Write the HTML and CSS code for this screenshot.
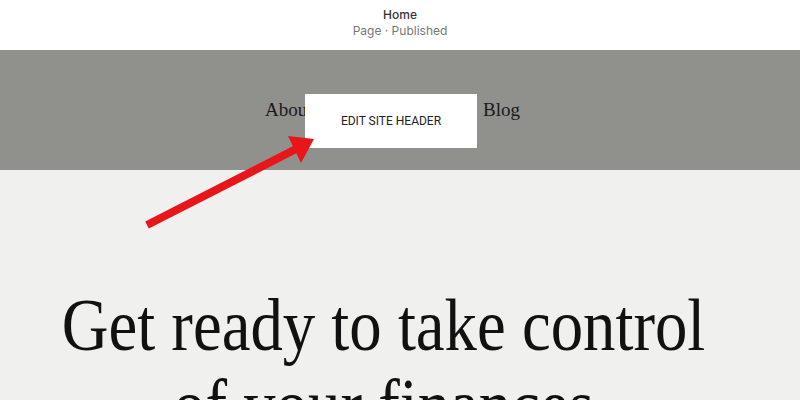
FILE: index.html
```html
<!DOCTYPE html>
<html lang="en">
<head>
  <meta charset="UTF-8">
  <meta name="viewport" content="width=device-width, initial-scale=1.0">
  <title>Home</title>
  <link rel="stylesheet" href="styles.css">
</head>
<body>
  <div class="topbar">
    <div class="page-title">Home</div>
    <div class="page-status">Page · Published</div>
  </div>

  <div class="site-header">
    <nav class="nav">
      <a href="#">About</a>
      <a href="#">Services</a>
      <a href="#">Blog</a>
    </nav>
    <button class="edit-header">EDIT SITE HEADER</button>
  </div>

  <main class="hero">
    <h1>Get ready to take control<br>of your finances</h1>
  </main>

  <svg class="arrow" width="800" height="400" viewBox="0 0 800 400">
    <line x1="147" y1="225" x2="296" y2="149" stroke="#e8161a" stroke-width="8"/>
    <polygon points="314,139 288,136 301,163" fill="#e8161a"/>
  </svg>
</body>
</html>
```

FILE: styles.css
```css
body {
  margin: 0;
  padding: 0;
  background: #f0f0ee;
  font-family: "Inter", "Liberation Sans", sans-serif;
  overflow: hidden;
}
.topbar {
  height: 50px;
  background: white;
  display: flex;
  flex-direction: column;
  align-items: center;
  padding-top: 7px;
  box-sizing: border-box;
}
.page-title {
  font-size: 12px;
  font-weight: 500;
  color: #333;
  line-height: 16px;
}
.page-status {
  font-size: 12px;
  color: #777;
  line-height: 16px;
}
.site-header {
  position: relative;
  height: 120px;
  background: #90908d;
}
.nav {
  display: flex;
  justify-content: center;
  gap: 53px;
  padding-top: 49px;
  padding-right: 15px;
  font-family: "Liberation Serif", serif;
  font-size: 19px;
}
.nav a {
  color: #1a1a1a;
  text-decoration: none;
}
.edit-header {
  position: absolute;
  left: 305px;
  top: 44px;
  width: 172px;
  height: 54px;
  background: white;
  border: none;
  font-family: "Roboto", "Liberation Sans", sans-serif;
  font-size: 12px;
  color: #222;
  cursor: pointer;
}
.hero {
  text-align: center;
  padding-top: 115px;
  padding-right: 33px;
}
.hero h1 {
  margin: 0;
  font-family: "Liberation Serif", serif;
  font-weight: normal;
  font-size: 74px;
  line-height: 80px;
  color: #111;
  transform: scaleX(0.875);
}
.arrow {
  position: absolute;
  left: 0;
  top: 0;
  pointer-events: none;
}
```
